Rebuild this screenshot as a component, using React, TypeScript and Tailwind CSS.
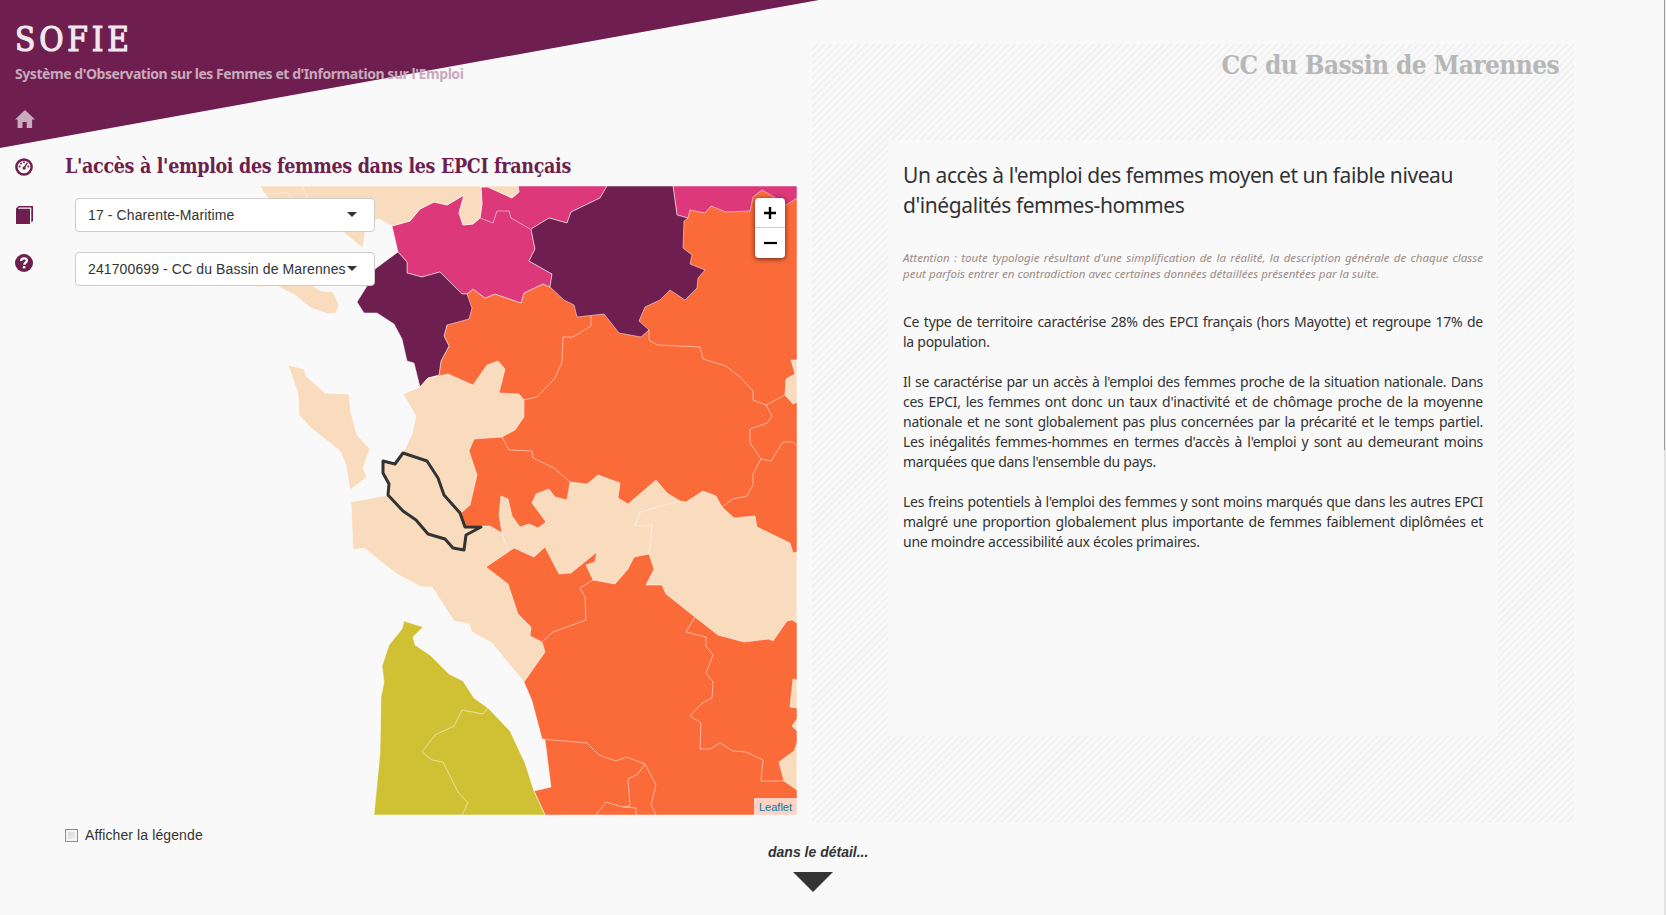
import React from "react";

const ORANGE = "#fb6a39";
const BEIGE = "#f9dcbe";
const PINK = "#dd387a";
const PLUM = "#6e1f4f";
const GREEN = "#d0c134";

const areas: { fill: string; points: string }[] = [
  {
    fill: ORANGE,
    points:
      "467,294 473,289 485,298 495,294 521,303 524,293 543,284 550,287 600,260 690,205 705,180 797,180 797,815 545,815 534,791 551,787 545,740 542,739 532,701 524,682 486,600 450,540 455,500 420,387 439,375 441,361 449,346 444,336 447,325 460,310",
  },
  {
    fill: PINK,
    points:
      "392,226 410,221 420,209 434,202 447,205 464,195 459,213 463,225 473,224 480,218 482,204 481,187 488,187 512,198 519,192 518,186 607,186 600,198 571,212 567,223 549,218 531,229 535,249 529,261 552,274 550,287 543,284 524,293 521,303 495,294 485,298 473,289 467,294 462,294 440,272 422,277 407,273 407,262 398,252",
  },
  {
    fill: PINK,
    points:
      "673,186 677,215 688,218 690,210 705,213 711,206 726,212 750,211 753,197 762,190 774,197 786,205 797,198 797,186",
  },
  {
    fill: BEIGE,
    points:
      "260,186 267,197 290,215 320,214 343,232 363,248 365,232 368,225 375,220 379,219 392,226 410,221 420,209 434,202 447,205 464,195 459,213 463,225 473,224 480,218 482,204 481,187 480,186",
  },
  { fill: BEIGE, points: "481,187 488,187 512,198 519,192 518,186 481,186" },
  {
    fill: PLUM,
    points:
      "398,252 407,262 407,273 422,277 440,272 462,294 467,294 472,308 469,319 447,325 444,336 449,346 441,361 439,375 428,378 420,387 414,363 407,361 402,339 394,324 377,313 364,313 357,302 367,286 375,269",
  },
  {
    fill: PLUM,
    points:
      "607,186 600,198 571,212 567,223 549,218 531,229 535,249 529,261 552,274 550,287 564,300 574,305 577,317 604,314 619,333 641,337 649,330 639,321 645,307 660,300 670,290 685,300 697,288 698,278 705,270 690,264 692,255 683,248 684,221 688,218 677,215 673,186",
  },
  {
    fill: BEIGE,
    points:
      "501,496 508,499 512,516 520,527 529,524 538,528 546,522 532,503 536,494 549,489 555,497 567,500 570,482 587,484 598,475 620,483 618,498 628,504 656,480 667,493 680,501 686,502 703,491 716,496 722,507 734,518 755,516 757,527 790,543 793,553 797,552 797,623 792,620 787,621 773,641 769,639 744,642 718,635 695,617 666,594 662,585 646,585 654,569 649,554 634,557 628,569 615,584 593,580 586,565 595,562 597,552 571,573 559,574 545,547 534,557 514,548 486,567 508,584 518,614 531,627 530,636 542,642 545,652 524,682 492,643 472,632 469,624 454,621 432,587 421,587 397,574 379,560 364,548 353,550 351,502 388,495 389,484 383,473 383,461 395,464 403,453 412,434 416,416 403,394 420,387 428,378 439,376 448,374 473,385 487,365 498,361 505,369 499,393 519,394 524,400 524,417 515,430 502,437 474,439 469,451 477,475 470,505 461,513 465,526 490,526 502,533 499,515",
  },
  {
    fill: BEIGE,
    points: "791,360 797,360 797,402 793,404 785,395 786,379 795,374",
  },
  { fill: BEIGE, points: "797,680 793,679 790,707 797,708" },
  { fill: BEIGE, points: "797,719 792,726 797,731" },
  { fill: BEIGE, points: "797,743 794,751 779,762 784,781 797,790" },
  {
    fill: GREEN,
    points:
      "404,621 423,627 413,637 415,645 430,655 449,674 463,681 474,698 488,708 510,731 525,763 534,791 545,815 374,815 380,753 381,697 384,682 382,666 389,645 402,629",
  },
  {
    fill: BEIGE,
    points:
      "253,284 257,287 277,286 295,295 311,308 328,314 336,313 339,305 333,292 321,291 313,286 300,278 270,276",
  },
  {
    fill: BEIGE,
    points:
      "288,365 304,369 306,376 325,393 349,394 351,413 357,435 370,449 363,468 367,477 350,490 346,465 340,451 311,428 299,415 298,393",
  },
];

const borders: string[] = [
  "265,194 288,193 291,198",
  "302,186 308,198",
  "480,218 493,223 497,211 509,211 511,218 530,229",
  "591,316 591,326 573,337 563,337 562,362 555,378 537,397 523,400",
  "649,330 649,340 657,345 700,347 703,359 726,366 740,377 753,391 753,400 766,405 785,395",
  "766,405 772,416 767,423 750,429 750,443 761,459 771,461 783,442 793,442 797,446",
  "761,459 753,474 753,485 747,496 733,499 722,507",
  "502,533 508,551",
  "502,437 509,450 532,451 533,458 554,468 570,482",
  "680,501 640,512 635,526 652,525 649,554",
  "797,612 792,620",
  "593,580 580,588 585,597 586,620 553,632 543,641",
  "695,617 686,632 706,637 706,646 713,655 706,673 713,682 712,698 702,703 690,716 701,723 700,749 710,749 720,743 733,751 746,752 763,760 761,781 784,781",
  "542,739 587,743 599,755 616,761 626,757 645,764 656,785 651,805 656,815",
  "645,764 638,774 628,779 630,806 623,807 606,802 596,815",
  "623,807 636,808 636,815",
  "488,708 483,714 462,710 454,726 435,735 422,752 432,760 443,762 458,792 468,803 462,815",
];

const selected =
  "403,453 427,461 438,478 444,495 460,513 465,527 481,527 466,535 464,550 453,548 445,539 428,534 416,520 403,511 388,495 389,484 383,473 383,461 395,464";

function TerritoryMap() {
  return (
    <svg viewBox="65 186 732 629" className="block h-[629px] w-[732px]">
      {areas.map((a, i) => (
        <polygon
          key={i}
          points={a.points}
          fill={a.fill}
          stroke="#fff"
          strokeOpacity="0.5"
          strokeWidth="1"
          strokeLinejoin="round"
        />
      ))}
      {borders.map((b, i) => (
        <polyline key={i} points={b} fill="none" stroke="#fff" strokeOpacity="0.5" strokeWidth="1" />
      ))}
      <polygon points={selected} fill="none" stroke="#333" strokeWidth="3" strokeLinejoin="round" />
    </svg>
  );
}

function Select({ label }: { label: string }) {
  return (
    <div className="flex h-[34px] w-[300px] items-center rounded-[4px] border border-[#ccc] bg-white pl-3 pr-[17px] text-[14px] tracking-[0.11px] text-[#333]">
      <span className="w-[259px] shrink-0 whitespace-nowrap">{label}</span>
      <svg viewBox="0 0 10 5" className="-mt-[2px] h-[5px] w-[10px] shrink-0">
        <path d="M0 0h10L5 5z" fill="#333" />
      </svg>
    </div>
  );
}

function HomeIcon() {
  return (
    <svg viewBox="0 0 20 18" className="h-[18px] w-5 fill-[#caaabd]">
      <path d="M10 0 0 9.6h2.6V18h4.9v-6h4.2v6h5.4V9.6H20z" />
    </svg>
  );
}

function GaugeIcon() {
  return (
    <svg viewBox="0 0 18 18" className="h-[18px] w-[18px]">
      <circle cx="9" cy="9" r="7.6" fill="none" stroke="#6e1f4f" strokeWidth="2.5" />
      <g fill="#6e1f4f">
        <circle cx="4.6" cy="8.6" r="1" />
        <circle cx="6" cy="5.6" r="1" />
        <circle cx="9" cy="4.3" r="1" />
        <circle cx="13.3" cy="8.6" r="1" />
        <path d="m12 4.3.9.7-2.4 4.2a1.6 1.6 0 1 1-1.4-.8z" />
      </g>
    </svg>
  );
}

function BookIcon() {
  return (
    <svg viewBox="0 0 18 18" className="h-[18px] w-[18px]">
      <path d="M1 2.5 3.5 0H18v15l-1.7 1.5V1.4H4L2.8 2.8H15V18H1z" fill="#6e1f4f" />
    </svg>
  );
}

function HelpIcon() {
  return (
    <svg viewBox="0 0 18 18" className="h-[18px] w-[18px]">
      <circle cx="9" cy="9" r="9" fill="#6e1f4f" />
      <path
        d="M6.1 7.1C6.1 5.1 7.3 4.4 9 4.4s2.9.8 2.9 2.3c0 1.9-2.6 1.8-2.6 4"
        fill="none"
        stroke="#f9f9f9"
        strokeWidth="2.3"
      />
      <rect x="7.8" y="12" width="2.6" height="2.4" fill="#f9f9f9" />
    </svg>
  );
}

function Paragraph({ lines, className }: { lines: string[]; className: string }) {
  return (
    <p className={className}>
      {lines.map((line, i) => (
        <span
          key={line}
          className={
            i < lines.length - 1
              ? "block whitespace-nowrap [text-align-last:justify]"
              : "block whitespace-nowrap"
          }
        >
          {line}
        </span>
      ))}
    </p>
  );
}

const body = "text-[14px] leading-5 tracking-[-0.27px]";

export default function App() {
  return (
    <div className="relative flex h-[915px] w-full flex-col overflow-hidden bg-[#f9f9f9] font-['Liberation_Sans',Arial,sans-serif] text-[#333]">
      <svg viewBox="0 0 819 148" className="absolute left-0 top-0 h-[148px] w-[819px]">
        <path d="M0 0h819L0 148z" fill="#6e1f4f" />
      </svg>

      <div className="relative flex h-[823px]">
        <div className="flex w-[812px] shrink-0 flex-col">
          <header className="h-[110px] pl-[15px] pt-[20px]">
            <h1 className="h-10 whitespace-nowrap font-['DejaVu_Serif_Condensed','DejaVu_Serif',serif] text-[33px] leading-10 tracking-[3.8px] text-[#f1e9ed] [-webkit-text-stroke:1.1px_#f1e9ed]">
              SOFIE
            </h1>
            <p className="mt-1 whitespace-nowrap font-['Noto_Sans',sans-serif] text-[14px] font-bold leading-5 tracking-[-0.44px] text-[#c9a9bc]">
              Système d'Observation sur les Femmes et d'Information sur l'Emploi
            </p>
          </header>

          <div className="flex">
            <nav className="flex w-[65px] flex-col gap-[30px] pl-[15px]">
              <HomeIcon />
              <GaugeIcon />
              <BookIcon />
              <HelpIcon />
            </nav>
            <main className="w-[732px]">
              <h2 className="flex h-[76px] items-end whitespace-nowrap pb-[5px] font-['DejaVu_Serif_Condensed','DejaVu_Serif',serif] text-[19.5px] font-bold leading-[28px] tracking-[-0.33px] text-[#6e1f4f]">
                L'accès à l'emploi des femmes dans les EPCI français
              </h2>
              <div className="relative">
                <TerritoryMap />
                <div className="absolute left-[10px] top-3 flex flex-col gap-5">
                  <Select label="17 - Charente-Maritime" />
                  <Select label="241700699 - CC du Bassin de Marennes" />
                </div>
                <div className="absolute right-3 top-3 flex w-[30px] flex-col rounded-[4px] bg-white shadow-[0_1px_5px_rgba(0,0,0,0.65)]">
                  <span className="flex h-[30px] items-center justify-center border-b border-[#ccc]">
                    <svg viewBox="0 0 12 12" className="h-3 w-3">
                      <path d="M0 6h12M6 0v12" stroke="#000" strokeWidth="2.4" />
                    </svg>
                  </span>
                  <span className="flex h-[30px] items-center justify-center pl-px">
                    <svg viewBox="0 0 13 12" className="h-3 w-[13px]">
                      <path d="M0 6h13" stroke="#000" strokeWidth="2.2" />
                    </svg>
                  </span>
                </div>
                <div className="absolute bottom-0 right-0 flex h-[17px] w-[43px] items-center justify-center bg-white/70 pt-px text-[11px] text-[#0078a8]">
                  Leaflet
                </div>
              </div>
            </main>
          </div>
        </div>

        <section className="mt-[44px] h-[779px] w-[762px] bg-[repeating-linear-gradient(-45deg,#f1f1f1_0px,#f1f1f1_1px,#f9f9f9_2px,#f9f9f9_4px,#f1f1f1_5px)]">
          <h2 className="flex h-24 justify-end whitespace-nowrap pr-[15px] pt-[3px] font-['DejaVu_Serif_Condensed','DejaVu_Serif',serif] text-[26px] font-bold leading-9 tracking-[-0.6px] text-[#b7b7b7]">
            CC du Bassin de Marennes
          </h2>
          <article className="ml-[76px] h-[596px] w-[610px] bg-[#f9f9f9] px-[15px] pt-5 font-['Noto_Sans',sans-serif]">
            <h3 className="whitespace-nowrap text-[21px] leading-[30px] tracking-[-0.42px]">
              Un accès à l'emploi des femmes moyen et un faible niveau
              <br />
              d'inégalités femmes-hommes
            </h3>
            <Paragraph
              className="mt-[30px] text-[11.5px] italic leading-4 tracking-[0.02px] text-[#9b8b86]"
              lines={[
                "Attention : toute typologie résultant d'une simplification de la réalité, la description générale de chaque classe",
                "peut parfois entrer en contradiction avec certaines données détaillées présentées par la suite.",
              ]}
            />
            <div className="mt-[30px] flex flex-col gap-5">
              <Paragraph
                className={body}
                lines={[
                  "Ce type de territoire caractérise 28% des EPCI français (hors Mayotte) et regroupe 17% de",
                  "la population.",
                ]}
              />
              <Paragraph
                className={body}
                lines={[
                  "Il se caractérise par un accès à l'emploi des femmes proche de la situation nationale. Dans",
                  "ces EPCI, les femmes ont donc un taux d'inactivité et de chômage proche de la moyenne",
                  "nationale et ne sont globalement pas plus concernées par la précarité et le temps partiel.",
                  "Les inégalités femmes-hommes en termes d'accès à l'emploi y sont au demeurant moins",
                  "marquées que dans l'ensemble du pays.",
                ]}
              />
              <Paragraph
                className={body}
                lines={[
                  "Les freins potentiels à l'emploi des femmes y sont moins marqués que dans les autres EPCI",
                  "malgré une proportion globalement plus importante de femmes faiblement diplômées et",
                  "une moindre accessibilité aux écoles primaires.",
                ]}
              />
            </div>
          </article>
        </section>
        <div className="ml-auto flex h-[915px] w-0.5 shrink-0 flex-col bg-[#e3e3e3]">
          <div className="h-[450px] border-l border-[#999] bg-[#eee]" />
        </div>
      </div>

      <footer className="relative flex h-[92px] text-[14px] leading-5">
        <label className="ml-[65px] mt-[2px] flex h-5 w-[703px] shrink-0 items-center gap-[7px] tracking-[0.11px]">
          <span className="h-[13px] w-[13px] border border-[#8e8f8f] bg-linear-to-br from-[#cfd1d4] to-[#f6f6f6] ring-2 ring-inset ring-[#f4f4f4]" />
          Afficher la légende
        </label>
        <div className="mt-[19px] flex w-[100px] flex-col">
          <span className="whitespace-nowrap font-bold italic">dans le détail...</span>
          <svg viewBox="0 0 40 20" className="ml-[25px] mt-[10px] h-5 w-10">
            <path d="M0 0h40L20 20z" fill="#333" />
          </svg>
        </div>
      </footer>
    </div>
  );
}
